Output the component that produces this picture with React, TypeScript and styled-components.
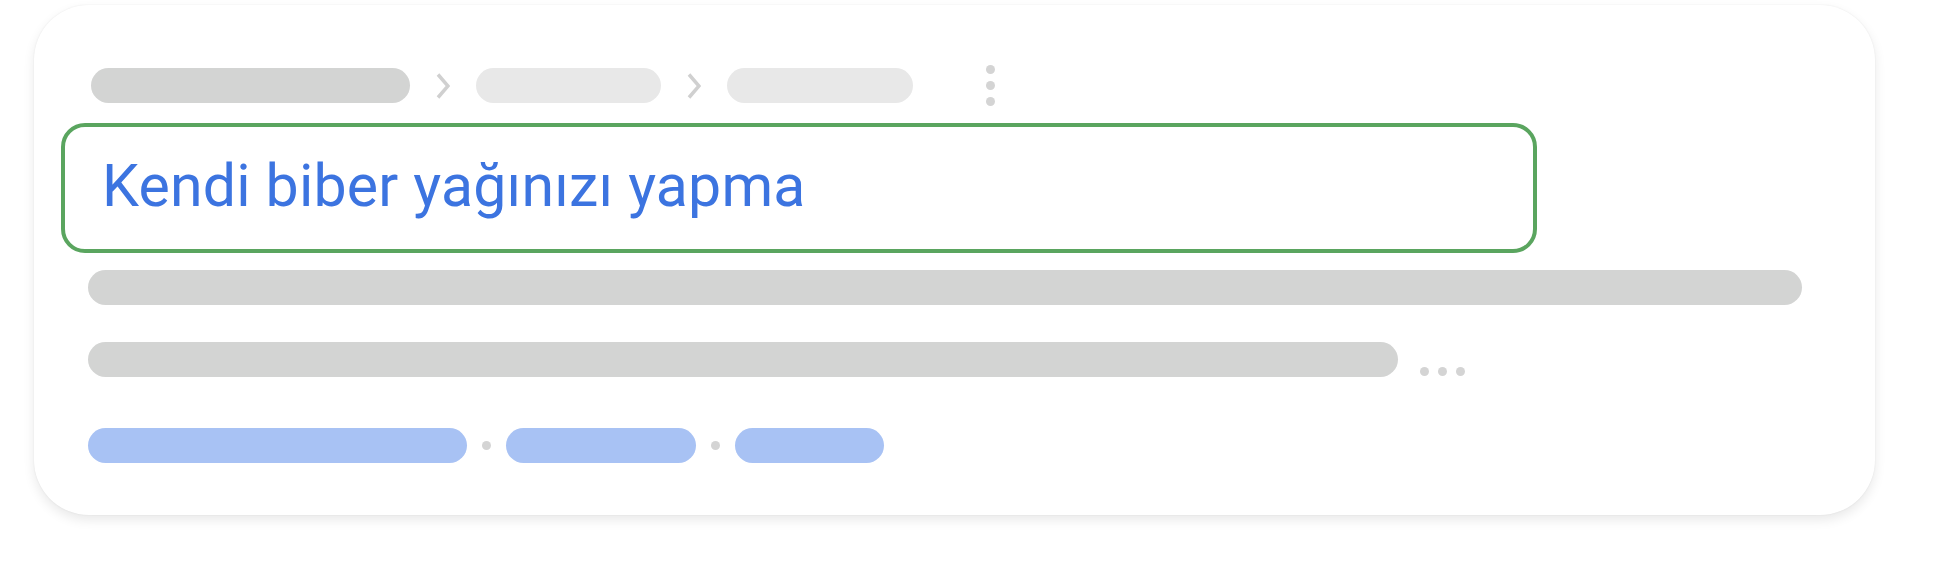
import styled, { createGlobalStyle } from "styled-components";

const GlobalStyle = createGlobalStyle`
  html, body {
    margin: 0;
    padding: 0;
    background: #ffffff;
    font-family: Roboto, "Liberation Sans", sans-serif;
  }
`;

const Page = styled.div`
  width: 1956px;
  height: 568px;
  padding: 5px 0 0 34px;
  box-sizing: border-box;
`;

const Card = styled.div`
  width: 1841px;
  height: 510px;
  box-sizing: border-box;
  padding: 63px 0 0 54px;
  background: #ffffff;
  border-radius: 55px;
  box-shadow: 0 5px 12px rgba(0, 0, 0, 0.09), 0 0 2px rgba(0, 0, 0, 0.07);
  display: flex;
  flex-direction: column;
`;

const Breadcrumbs = styled.div`
  display: flex;
  align-items: center;
  gap: 26px;
  margin-left: 3px;
  height: 35px;
`;

const Pill = styled.div<{ $w: number; $color: string }>`
  width: ${(p) => p.$w}px;
  height: 35px;
  border-radius: 18px;
  background: ${(p) => p.$color};
  flex-shrink: 0;
`;

const Kebab = styled.div`
  display: flex;
  flex-direction: column;
  gap: 7px;
  margin-left: 47px;
`;

const Dot = styled.span<{ $size: number }>`
  display: block;
  width: ${(p) => p.$size}px;
  height: ${(p) => p.$size}px;
  border-radius: 50%;
  background: #d4d4d4;
  flex-shrink: 0;
`;

const TitleBox = styled.div`
  width: 1476px;
  height: 130px;
  box-sizing: border-box;
  margin: 20px 0 0 -27px;
  border: 4px solid #5aa55f;
  border-radius: 24px;
  padding: 0 0 6px 37px;
  display: flex;
  align-items: center;
`;

const Title = styled.h1`
  margin: 0;
  font-family: Roboto, "Liberation Sans", sans-serif;
  font-size: 59px;
  font-weight: 400;
  letter-spacing: 0.2px;
  color: #3c74e0;
  line-height: 1;
  white-space: nowrap;
`;

const Line = styled.div<{ $w: number; $top: number }>`
  width: ${(p) => p.$w}px;
  height: 35px;
  margin-top: ${(p) => p.$top}px;
  border-radius: 18px;
  background: #d3d4d3;
  flex-shrink: 0;
`;

const LineRow = styled.div`
  display: flex;
  align-items: flex-end;
  gap: 22px;
  margin-top: 37px;
`;

const Ellipsis = styled.div`
  display: flex;
  gap: 9px;
  margin-bottom: 1px;
`;

const LinkRow = styled.div`
  display: flex;
  align-items: center;
  gap: 15px;
  margin-top: 51px;
`;

const Chevron = () => (
  <svg width="14" height="26" viewBox="0 0 14 26">
    <polyline
      points="2,1.5 12,13 2,24.5"
      fill="none"
      stroke="#d0d0d0"
      strokeWidth="3.5"
    />
  </svg>
);

export default function App() {
  return (
    <>
      <GlobalStyle />
      <Page>
        <Card>
          <Breadcrumbs>
            <Pill $w={319} $color="#d3d4d3" />
            <Chevron />
            <Pill $w={185} $color="#e8e8e8" />
            <Chevron />
            <Pill $w={186} $color="#e8e8e8" />
            <Kebab>
              <Dot $size={9} />
              <Dot $size={9} />
              <Dot $size={9} />
            </Kebab>
          </Breadcrumbs>
          <TitleBox>
            <Title>Kendi biber yağınızı yapma</Title>
          </TitleBox>
          <Line $w={1714} $top={17} />
          <LineRow>
            <Line $w={1310} $top={0} />
            <Ellipsis>
              <Dot $size={9} />
              <Dot $size={9} />
              <Dot $size={9} />
            </Ellipsis>
          </LineRow>
          <LinkRow>
            <Pill $w={379} $color="#a8c2f4" />
            <Dot $size={9} />
            <Pill $w={190} $color="#a8c2f4" />
            <Dot $size={9} />
            <Pill $w={149} $color="#a8c2f4" />
          </LinkRow>
        </Card>
      </Page>
    </>
  );
}
